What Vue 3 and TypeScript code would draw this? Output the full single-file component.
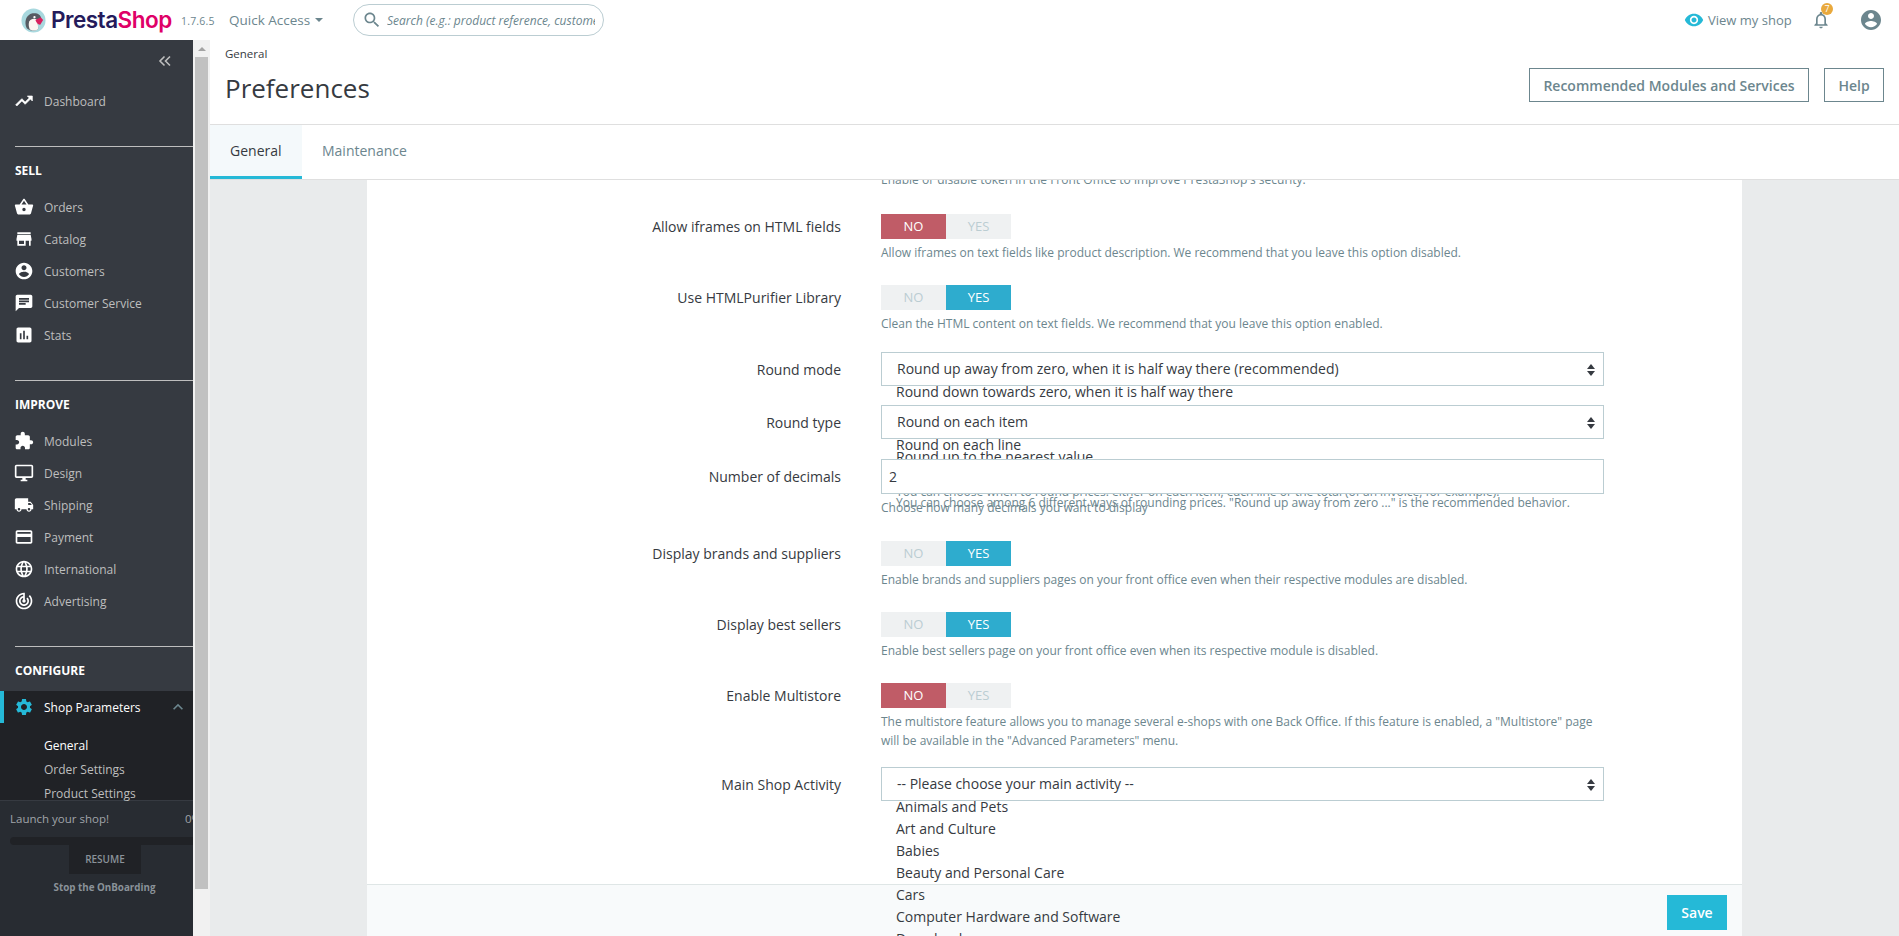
<script setup lang="ts">
const icons: Record<string, string> = {
  trend: 'M16 6l2.29 2.29-4.88 4.88-4-4L2 16.59 3.41 18l6-6 4 4 6.3-6.29L22 12V6z',
  basket: 'M17.21 9l-4.38-6.56c-.19-.28-.51-.42-.83-.42-.32 0-.64.14-.83.43L6.79 9H2c-.55 0-1 .45-1 1 0 .09.01.18.04.27l2.54 9.27c.23.84 1 1.46 1.92 1.46h13c.92 0 1.69-.62 1.93-1.46l2.54-9.27L23 10c0-.55-.45-1-1-1h-4.79zM9 9l3-4.4L15 9H9zm3 8c-1.1 0-2-.9-2-2s.9-2 2-2 2 .9 2 2-.9 2-2 2z',
  store: 'M20 4H4v2h16V4zm1 10v-2l-1-5H4l-1 5v2h1v6h10v-6h4v6h2v-6h1zm-9 4H6v-4h6v4z',
  account: 'M12 2C6.48 2 2 6.48 2 12s4.48 10 10 10 10-4.48 10-10S17.52 2 12 2zm0 3c1.66 0 3 1.34 3 3s-1.34 3-3 3-3-1.34-3-3 1.34-3 3-3zm0 14.2c-2.5 0-4.71-1.28-6-3.22.03-1.99 4-3.08 6-3.08 1.99 0 5.97 1.09 6 3.08-1.29 1.94-3.5 3.22-6 3.22z',
  chat: 'M20 2H4c-1.1 0-1.99.9-1.99 2L2 22l4-4h14c1.1 0 2-.9 2-2V4c0-1.1-.9-2-2-2zM6 9h12v2H6V9zm8 5H6v-2h8v2zm4-6H6V6h12v2z',
  stats: 'M19 3H5c-1.1 0-2 .9-2 2v14c0 1.1.9 2 2 2h14c1.1 0 2-.9 2-2V5c0-1.1-.9-2-2-2zM9 17H7v-7h2v7zm4 0h-2V7h2v10zm4 0h-2v-4h2v4z',
  puzzle: 'M20.5 11H19V7c0-1.1-.9-2-2-2h-4V3.5C13 2.12 11.88 1 10.5 1S8 2.12 8 3.5V5H4c-1.1 0-1.99.9-1.99 2v3.8H3.5c1.49 0 2.7 1.21 2.7 2.7s-1.21 2.7-2.7 2.7H2V20c0 1.1.9 2 2 2h3.8v-1.5c0-1.49 1.21-2.7 2.7-2.7 1.49 0 2.7 1.21 2.7 2.7V22H17c1.1 0 2-.9 2-2v-4h1.5c1.38 0 2.5-1.12 2.5-2.5S21.88 11 20.5 11z',
  desktop: 'M21 2H3c-1.1 0-2 .9-2 2v12c0 1.1.9 2 2 2h7v2H8v2h8v-2h-2v-2h7c1.1 0 2-.9 2-2V4c0-1.1-.9-2-2-2zm0 14H3V4h18v12z',
  truck: 'M20 8h-3V4H3c-1.1 0-2 .9-2 2v11h2c0 1.66 1.34 3 3 3s3-1.34 3-3h6c0 1.66 1.34 3 3 3s3-1.34 3-3h2v-5l-3-4zM6 18.5c-.83 0-1.5-.67-1.5-1.5s.67-1.5 1.5-1.5 1.5.67 1.5 1.5-.67 1.5-1.5 1.5zm13.5-9l1.96 2.5H17V9.5h2.5zm-1.5 9c-.83 0-1.5-.67-1.5-1.5s.67-1.5 1.5-1.5 1.5.67 1.5 1.5-.67 1.5-1.5 1.5z',
  card: 'M20 4H4c-1.11 0-1.99.89-1.99 2L2 18c0 1.11.89 2 2 2h16c1.11 0 2-.89 2-2V6c0-1.11-.89-2-2-2zm0 14H4v-6h16v6zm0-10H4V6h16v2z',
  globe: 'M11.99 2C6.47 2 2 6.48 2 12s4.47 10 9.99 10C17.52 22 22 17.52 22 12S17.52 2 11.99 2zm6.93 6h-2.95c-.32-1.25-.78-2.45-1.38-3.56 1.84.63 3.37 1.91 4.33 3.56zM12 4.04c.83 1.2 1.48 2.53 1.91 3.96h-3.82c.43-1.43 1.08-2.76 1.91-3.96zM4.26 14C4.1 13.36 4 12.69 4 12s.1-1.36.26-2h3.38c-.08.66-.14 1.32-.14 2 0 .68.06 1.34.14 2H4.26zm.82 2h2.95c.32 1.25.78 2.45 1.38 3.56-1.84-.63-3.37-1.9-4.33-3.56zm2.95-8H5.08c.96-1.66 2.49-2.93 4.33-3.56C8.81 5.55 8.35 6.75 8.03 8zM12 19.96c-.83-1.2-1.48-2.53-1.91-3.96h3.82c-.43 1.43-1.08 2.76-1.91 3.96zM14.34 14H9.66c-.09-.66-.16-1.32-.16-2 0-.68.07-1.35.16-2h4.68c.09.65.16 1.32.16 2 0 .68-.07 1.34-.16 2zm.25 5.56c.6-1.11 1.06-2.31 1.38-3.56h2.95c-.96 1.65-2.49 2.93-4.33 3.56zM16.36 14c.08-.66.14-1.32.14-2 0-.68-.06-1.34-.14-2h3.38c.16.64.26 1.31.26 2s-.1 1.36-.26 2h-3.38z',
  target: 'M19.07 4.93l-1.41 1.41C19.1 7.79 20 9.79 20 12c0 4.42-3.58 8-8 8s-8-3.58-8-8c0-4.08 3.05-7.44 7-7.93v2.02C8.16 6.57 6 9.03 6 12c0 3.31 2.69 6 6 6s6-2.69 6-6c0-1.66-.67-3.16-1.76-4.24l-1.41 1.41C15.55 9.9 16 10.9 16 12c0 2.21-1.79 4-4 4s-4-1.79-4-4c0-1.86 1.28-3.41 3-3.86v2.14c-.6.35-1 .98-1 1.72 0 1.1.9 2 2 2s2-.9 2-2c0-.74-.4-1.38-1-1.72V2h-1C6.48 2 2 6.48 2 12s4.48 10 10 10 10-4.48 10-10c0-2.76-1.12-5.26-2.93-7.07z',
  gear: 'M19.14 12.94c.04-.3.06-.61.06-.94 0-.32-.02-.64-.07-.94l2.03-1.58c.18-.14.23-.41.12-.61l-1.92-3.32c-.12-.22-.37-.29-.59-.22l-2.39.96c-.5-.38-1.03-.7-1.62-.94l-.36-2.54c-.04-.24-.24-.41-.48-.41h-3.84c-.24 0-.43.17-.47.41l-.36 2.54c-.59.24-1.13.57-1.62.94l-2.39-.96c-.22-.08-.47 0-.59.22L2.74 8.87c-.12.21-.08.47.12.61l2.03 1.58c-.05.3-.09.63-.09.94s.02.64.07.94l-2.03 1.58c-.18.14-.23.41-.12.61l1.92 3.32c.12.22.37.29.59.22l2.39-.96c.5.38 1.03.7 1.62.94l.36 2.54c.05.24.24.41.48.41h3.84c.24 0 .44-.17.47-.41l.36-2.54c.59-.24 1.13-.56 1.62-.94l2.39.96c.22.08.47 0 .59-.22l1.92-3.32c.12-.22.07-.47-.12-.61l-2.01-1.58zM12 15.6c-1.98 0-3.6-1.62-3.6-3.6s1.62-3.6 3.6-3.6 3.6 1.62 3.6 3.6-1.62 3.6-3.6 3.6z',
  up: 'M7.41 15.41L12 10.83l4.59 4.58L18 14l-6-6-6 6z',
  eye: 'M12 4.5C7 4.5 2.73 7.61 1 12c1.73 4.39 6 7.5 11 7.5s9.27-3.11 11-7.5c-1.73-4.39-6-7.5-11-7.5zM12 17c-2.76 0-5-2.24-5-5s2.24-5 5-5 5 2.24 5 5-2.24 5-5 5zm0-8c-1.66 0-3 1.34-3 3s1.34 3 3 3 3-1.34 3-3-1.34-3-3-3z',
  bell: 'M12 22c1.1 0 2-.9 2-2h-4c0 1.1.9 2 2 2zm6-6v-5c0-3.07-1.63-5.64-4.5-6.32V4c0-.83-.67-1.5-1.5-1.5s-1.5.67-1.5 1.5v.68C7.64 5.36 6 7.92 6 11v5l-2 2v1h16v-1l-2-2zm-2 1H8v-6c0-2.48 1.51-4.5 4-4.5s4 2.02 4 4.5v6z',
  search: 'M15.5 14h-.79l-.28-.27C15.41 12.59 16 11.11 16 9.5 16 5.91 13.09 3 9.5 3S3 5.91 3 9.5 5.91 16 9.5 16c1.61 0 3.09-.59 4.23-1.57l.27.28v.79l5 4.99L20.49 19l-4.99-5zm-6 0C7.01 14 5 11.99 5 9.5S7.01 5 9.5 5 14 7.01 14 9.5 11.99 14 9.5 14z'
}

interface NavItem { label: string; icon: string }
interface NavSection { title: string; items: NavItem[] }

const sections: NavSection[] = [
  {
    title: 'SELL',
    items: [
      { label: 'Orders', icon: 'basket' },
      { label: 'Catalog', icon: 'store' },
      { label: 'Customers', icon: 'account' },
      { label: 'Customer Service', icon: 'chat' },
      { label: 'Stats', icon: 'stats' }
    ]
  },
  {
    title: 'IMPROVE',
    items: [
      { label: 'Modules', icon: 'puzzle' },
      { label: 'Design', icon: 'desktop' },
      { label: 'Shipping', icon: 'truck' },
      { label: 'Payment', icon: 'card' },
      { label: 'International', icon: 'globe' },
      { label: 'Advertising', icon: 'target' }
    ]
  }
]

const activityOptions = [
  'Animals and Pets',
  'Art and Culture',
  'Babies',
  'Beauty and Personal Care',
  'Cars',
  'Computer Hardware and Software',
  'Downloads'
]
</script>

<template>
  <div class="app">
    <header class="topbar">
      <div class="logo">
        <svg class="puffin" viewBox="0 0 26 26" aria-hidden="true">
          <circle cx="13" cy="13" r="12.5" fill="#a8d8de" />
          <path d="M6 21c-3-6-1-14 6-15.500 5-.8 8.500 1.500 9 5l-4 2 1 9c-2.500 2.500-8.500 3-12-.5z" fill="#565b62" />
          <path d="M8.500 14c2-3.500 6-3.500 8.500-1.500l1 9c-2 2.500-7 2.500-9 .5-1.200-3-1.200-5.500-.5-8z" fill="#fbf6f2" />
          <path d="M15 12.500l5.500-3 2.500 3-3 5c-2 0-4-2-5-5z" fill="#d8215f" />
          <circle cx="14" cy="9.500" r="1.200" fill="#fff" />
        </svg>
        <span class="wordmark"><span class="presta">Presta</span><span class="shop">Shop</span></span>
      </div>
      <span class="version">1.7.6.5</span>
      <span class="quick">Quick Access<i class="caret"></i></span>
      <div class="search">
        <svg viewBox="0 0 24 24" class="search-icon"><path :d="icons.search" /></svg>
        <span class="search-text">Search (e.g.: product reference, customer name…)</span>
      </div>
      <div class="top-right">
        <svg viewBox="0 0 24 24" class="eye"><path :d="icons.eye" /></svg>
        <span class="view">View my shop</span>
        <span class="bell-wrap">
          <svg viewBox="0 0 24 24" class="bell"><path :d="icons.bell" /></svg>
          <span class="badge">7</span>
        </span>
        <svg viewBox="0 0 24 24" class="avatar"><path :d="icons.account" /></svg>
      </div>
    </header>

    <div class="below">
      <aside class="sidebar">
        <nav class="nav">
          <div class="collapse">
            <svg viewBox="0 0 14 12" class="chev"><path d="M6.500 1.500L2 6l4.500 4.500M12 1.500L7.500 6l4.500 4.500" /></svg>
          </div>
          <a class="item dash">
            <svg viewBox="0 0 24 24" class="ico"><path :d="icons.trend" /></svg>
            <span>Dashboard</span>
          </a>
          <section v-for="s in sections" :key="s.title" class="section">
            <h3 class="section-title">{{ s.title }}</h3>
            <a v-for="it in s.items" :key="it.label" class="item">
              <svg viewBox="0 0 24 24" class="ico"><path :d="icons[it.icon]" /></svg>
              <span>{{ it.label }}</span>
            </a>
          </section>
          <section class="section">
            <h3 class="section-title">CONFIGURE</h3>
            <div class="active-block">
              <a class="item active">
                <svg viewBox="0 0 24 24" class="ico"><path :d="icons.gear" /></svg>
                <span>Shop Parameters</span>
                <svg viewBox="0 0 24 24" class="up"><path :d="icons.up" /></svg>
              </a>
              <ul class="sub">
                <li class="current">General</li>
                <li>Order Settings</li>
                <li>Product Settings</li>
              </ul>
            </div>
          </section>
        </nav>
        <div class="onboarding">
          <div class="launch"><span>Launch your shop!</span><span>0%</span></div>
          <div class="progress"></div>
          <div class="resume">RESUME</div>
          <div class="stop">Stop the OnBoarding</div>
        </div>
      </aside>

      <div class="scrollbar">
        <div class="scroll-btn"><i></i></div>
        <div class="thumb"></div>
      </div>

      <main class="content">
        <div class="page-head">
          <div>
            <div class="crumb">General</div>
            <h1 class="title">Preferences</h1>
          </div>
          <div class="head-actions">
            <button class="outline">Recommended Modules and Services</button>
            <button class="outline help-btn">Help</button>
          </div>
        </div>
        <div class="tabs">
          <a class="tab on">General</a>
          <a class="tab">Maintenance</a>
        </div>

        <div class="scroll">
          <div class="card">
            <div class="form">
              <p class="help first">Enable or disable token in the Front Office to improve PrestaShop's security.</p>

              <div class="row gap-23">
                <label>Allow iframes on HTML fields</label>
                <div class="toggle"><span class="no on">NO</span><span>YES</span></div>
                <p class="help">Allow iframes on text fields like product description. We recommend that you leave this option disabled.</p>
              </div>

              <div class="row gap-19">
                <label>Use HTMLPurifier Library</label>
                <div class="toggle"><span>NO</span><span class="yes on">YES</span></div>
                <p class="help">Clean the HTML content on text fields. We recommend that you leave this option enabled.</p>
              </div>

              <div class="row gap-19">
                <label>Round mode</label>
                <div class="field">
                  <div class="select">Round up away from zero, when it is half way there (recommended)<i class="arrows"></i></div>
                  <div class="spill"><div class="opt">Round down towards zero, when it is half way there</div></div>
                </div>
              </div>

              <div class="row gap-20">
                <label>Round type</label>
                <div class="field">
                  <div class="select">Round on each item<i class="arrows"></i></div>
                  <div class="spill tight">
                    <div class="opt">Round on each line</div>
                    <div class="opt">Round up to the nearest value</div>
                    <p class="spill-help">You can choose when to round prices: either on each item, each line or the total (of an invoice, for example).</p>
                    <p class="spill-help">You can choose among 6 different ways of rounding prices. "Round up away from zero ..." is the recommended behavior.</p>
                  </div>
                </div>
              </div>

              <div class="row gap-24">
                <label>Number of decimals</label>
                <div class="input">2</div>
                <p class="help">Choose how many decimals you want to display</p>
              </div>

              <div class="row gap-23">
                <label>Display brands and suppliers</label>
                <div class="toggle"><span>NO</span><span class="yes on">YES</span></div>
                <p class="help">Enable brands and suppliers pages on your front office even when their respective modules are disabled.</p>
              </div>

              <div class="row gap-23">
                <label>Display best sellers</label>
                <div class="toggle"><span>NO</span><span class="yes on">YES</span></div>
                <p class="help">Enable best sellers page on your front office even when its respective module is disabled.</p>
              </div>

              <div class="row gap-17">
                <label>Enable Multistore</label>
                <div class="toggle"><span class="no on">NO</span><span>YES</span></div>
                <p class="help">The multistore feature allows you to manage several e-shops with one Back Office. If this feature is enabled, a "Multistore" page<br />will be available in the "Advanced Parameters" menu.</p>
              </div>

              <div class="row">
                <label>Main Shop Activity</label>
                <div class="field">
                  <div class="select">-- Please choose your main activity --<i class="arrows"></i></div>
                  <div class="spill wide">
                    <div v-for="o in activityOptions" :key="o" class="opt">{{ o }}</div>
                  </div>
                </div>
              </div>
            </div>
            <div class="footer"><button class="save">Save</button></div>
          </div>
        </div>
      </main>
    </div>
  </div>
</template>

<style>
html, body { margin: 0; padding: 0; overflow: hidden; background: #fff; }
</style>

<style scoped>
.app {
  width: 1899px;
  height: 936px;
  display: flex;
  flex-direction: column;
  overflow: hidden;
  font-family: "Open Sans", "Liberation Sans", sans-serif;
  color: #363a41;
  font-size: 14px;
}
p, h1, h3, ul { margin: 0; padding: 0; }

/* top bar */
.topbar { height: 40px; flex: none; display: flex; align-items: center; background: #fff; position: relative; }
.logo { display: flex; align-items: center; margin-left: 21px; width: 160px; }
.puffin { width: 25px; height: 25px; flex: none; }
.wordmark { margin-left: 5px; font-family: Inter, "Open Sans", sans-serif; font-size: 22.5px; font-weight: 600; letter-spacing: -0.5px; line-height: 40px; }
.presta { color: #251b5b; }
.shop { color: #df0067; }
.version { font-size: 10.500px; color: #6c868e; width: 48px; margin-top: 2px; letter-spacing: 0.2px; }
.quick { color: #6c868e; font-size: 13.500px; display: flex; align-items: center; width: 124px; }
.caret { width: 0; height: 0; border: 4px solid transparent; border-top-color: #6c868e; border-bottom: 0; margin-left: 5px; }
.search { width: 251px; height: 32px; box-sizing: border-box; border: 1px solid #bbcdd2; border-radius: 16px; display: flex; align-items: center; padding: 0 8px 0 8px; overflow: hidden; }
.search-icon { width: 20px; height: 20px; fill: #6c868e; flex: none; margin-right: 5px; }
.search-text { font-size: 12px; font-style: italic; color: #6c868e; white-space: nowrap; overflow: hidden; }
.top-right { margin-left: auto; display: flex; align-items: center; padding-right: 16px; }
.eye { width: 20px; height: 20px; fill: #25b9d7; }
.view { color: #6c868e; font-size: 13px; margin-left: 4px; width: 103px; }
.bell-wrap { position: relative; width: 20px; height: 20px; margin-right: 28px; }
.bell { width: 20px; height: 20px; fill: #6c868e; }
.badge { position: absolute; left: 10px; top: -7px; width: 12px; height: 12px; border-radius: 50%; background: #e9a93d; color: #fff; font-size: 9px; line-height: 12px; text-align: center; }
.avatar { width: 24px; height: 24px; fill: #6c868e; }

.below { flex: 1; display: flex; min-height: 0; }

/* sidebar */
.sidebar { width: 193px; flex: none; background: #363a41; display: flex; flex-direction: column; }
.nav { flex: 1; min-height: 0; overflow: hidden; }
.collapse { height: 45px; display: flex; align-items: center; justify-content: flex-end; padding-right: 21px; box-sizing: border-box; padding-bottom: 4px; }
.chev { width: 14px; height: 12px; fill: none; stroke: #bebebe; stroke-width: 1.600; }
.item { height: 32px; display: flex; align-items: center; padding-left: 14px; color: #bebebe; font-size: 12px; position: relative; }
.item.dash { margin-bottom: 1px; }
.item.dash .ico { stroke: #fff; stroke-width: 0.8; }
.ico { width: 20px; height: 20px; fill: #fff; flex: none; margin-right: 10px; }
.section { margin-left: 15px; border-top: 1px solid #bebebe; margin-top: 29px; }
.section .item { margin-left: -15px; }
.section-title { font-size: 12px; font-weight: 700; color: #fff; height: 44px; line-height: 48px; }
.active-block { margin-left: -15px; background: #202226; height: 109px; }
.item.active { color: #fff; border-left: 4px solid #25b9d7; padding-left: 10px; margin-left: 0; }
.item.active .ico { fill: #25b9d7; }
.up { width: 20px; height: 20px; fill: #6c868e; position: absolute; right: 5px; top: 6px; }
.sub { list-style: none; padding: 11px 0 0 44px; font-size: 12px; color: #bebebe; }
.sub li { line-height: 24px; }
.sub .current { color: #fff; }

.onboarding { height: 135px; flex: none; background: #282c32; overflow: hidden; }
.launch { display: flex; justify-content: space-between; width: 191px; padding-left: 10px; font-size: 11.500px; color: #a0a4a9; height: 36px; line-height: 36px; white-space: nowrap; }
.progress { height: 8px; margin-left: 10px; background: #202226; border-radius: 4px 0 0 4px; }
.resume { width: 72px; height: 29px; margin-left: 69px; background: #202226; color: #8a9299; font-size: 10px; font-weight: 600; text-align: center; line-height: 29px; }
.stop { font-size: 9.800px; font-weight: 700; color: #8a9299; text-align: center; margin-top: 5px; padding-left: 16px; line-height: 18px; }

/* scrollbar */
.scrollbar { width: 17px; flex: none; background: #f1f1f1; display: flex; flex-direction: column; }
.scroll-btn { height: 17px; display: flex; align-items: center; justify-content: center; }
.scroll-btn i { width: 0; height: 0; border: 4px solid transparent; border-bottom-color: #a3a3a3; border-top: 0; }
.thumb { margin: 0 2px; height: 832px; background: #c1c1c1; }

/* content */
.content { flex: 1; min-width: 0; display: flex; flex-direction: column; background: #e9ebec; }
.page-head { height: 85px; box-sizing: border-box; flex: none; background: #fff; border-bottom: 1px solid #dfdfdf; display: flex; justify-content: space-between; padding: 0 15px; }
.crumb { font-size: 11.500px; line-height: 16px; margin-top: 6px; }
.title { font-size: 26px; font-weight: 400; line-height: 36px; margin-top: 8px; }
.head-actions { display: flex; gap: 15px; padding-top: 28px; }
.outline { height: 34px; box-sizing: border-box; border: 1px solid #6c868e; background: #fff; color: #6c868e; font-family: inherit; font-size: 14px; font-weight: 600; padding: 0; width: 280px; }
.help-btn { width: 60px; }
.tabs { height: 55px; flex: none; box-sizing: border-box; background: #fff; border-bottom: 1px solid #dfdfdf; display: flex; }
.tab { height: 54px; box-sizing: border-box; padding: 0 20px; line-height: 52px; color: #6c868e; font-size: 14px; }
.tab.on { width: 92px; background: #f4f9fb; color: #363a41; border-bottom: 3px solid #25b9d7; }

.scroll { flex: 1; min-height: 0; overflow: hidden; padding: 0 157px; }
.card { width: 1375px; height: 100%; background: #fff; display: flex; flex-direction: column; }
.form { flex: 1; min-height: 0; position: relative; z-index: 1; margin-top: -10px; }
.help { font-size: 12px; line-height: 19px; color: #6c868e; }
.help.first { margin-left: 514px; margin-bottom: 25px; }
.row { display: grid; grid-template-columns: 474px 723px; column-gap: 40px; }
.row label { grid-row: 1; grid-column: 1; align-self: center; text-align: right; font-size: 14px; }
.row .help { grid-row: 2; grid-column: 2; margin-top: 4px; white-space: nowrap; }
.gap-17 { margin-bottom: 17px; }
.gap-19 { margin-bottom: 19px; }
.gap-20 { margin-bottom: 20px; }
.gap-23 { margin-bottom: 23px; }
.gap-24 { margin-bottom: 24px; }

.toggle { display: flex; width: 130px; height: 25px; grid-column: 2; }
.toggle span { flex: 1; background: #eff1f2; color: #bbcdd2; font-size: 13px; font-weight: 400; text-align: center; line-height: 25px; }
.toggle .no.on { background: #c05c67; color: #fff; }
.toggle .yes.on { background: #2eacce; color: #fff; }

.field { position: relative; grid-column: 2; height: 34px; }
.select { position: relative; z-index: 2; height: 34px; box-sizing: border-box; border: 1px solid #bbcdd2; background: #fff; padding-left: 15px; line-height: 32px; font-size: 14px; }
.arrows { position: absolute; right: 12px; top: 11px; width: 0; height: 0; }
.arrows::before, .arrows::after { content: ""; position: absolute; left: -4px; border-left: 4px solid transparent; border-right: 4px solid transparent; }
.arrows::before { top: 0; border-bottom: 5px solid #363a41; }
.arrows::after { top: 7px; border-top: 5px solid #363a41; }
.spill { position: absolute; left: 15px; right: 0; top: 34px; z-index: 1; }
.opt { font-size: 14px; line-height: 12px; white-space: nowrap; }
.wide { top: 29px; }
.wide .opt { line-height: 22px; }
.spill-help { font-size: 12px; line-height: 11px; color: #6c868e; white-space: nowrap; }
.spill-help:first-of-type { margin-top: 23px; }
.input { position: relative; z-index: 2; grid-column: 2; height: 35px; box-sizing: border-box; border: 1px solid #bbcdd2; background: #fff; padding-left: 7px; line-height: 33px; font-size: 14px; }

.footer { flex: none; height: 52px; box-sizing: border-box; background: #f8fafb; border-top: 1px solid #dfe6e6; display: flex; justify-content: flex-end; padding: 10px 15px 0 0; }
.save { width: 60px; height: 35px; border: 0; background: #25b9d7; color: #fff; font-family: inherit; font-size: 14px; font-weight: 600; padding: 0; }
</style>
